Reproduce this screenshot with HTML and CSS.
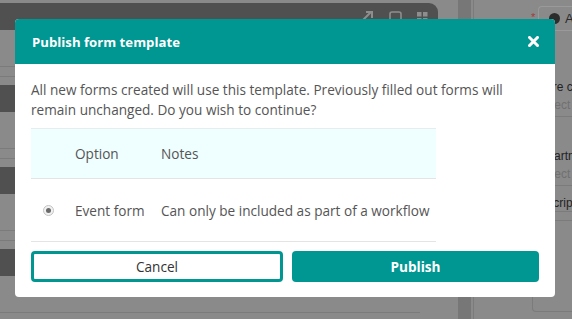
FILE: index.html
```html
<!DOCTYPE html>
<html>
<head>
<meta charset="utf-8">
<link rel="stylesheet" href="styles.css">
</head>
<body>
<div class="page">
  <div class="main">
    <div class="topbar">
      <svg class="tb-icon" width="16" height="14" viewBox="0 0 16 14"><path d="M2 13 L13 2 M8 2 H14 V8" fill="none" stroke="#8e8e8e" stroke-width="2"/></svg>
      <svg class="tb-icon" width="13" height="13" viewBox="0 0 13 13"><rect x="1" y="1" width="11" height="11" rx="2" fill="none" stroke="#8e8e8e" stroke-width="1.6"/></svg>
      <svg class="tb-icon" width="11" height="11" viewBox="0 0 11 11"><rect x="0" y="0" width="4.5" height="4.5" fill="#8e8e8e"/><rect x="6" y="0" width="4.5" height="4.5" fill="#8e8e8e"/><rect x="0" y="6" width="4.5" height="4.5" fill="#8e8e8e"/><rect x="6" y="6" width="4.5" height="4.5" fill="#8e8e8e"/></svg>
    </div>
    <div class="row-a"></div><div class="row-b"></div>
    <div class="band"></div>
    <div class="row-a"></div><div class="row-b"></div>
    <div class="band"></div>
    <div class="row-a"></div><div class="row-b"></div>
    <div class="band"></div>
    <div class="row-a"></div>
  </div>
  <div class="gutter"><div class="strip"></div></div>
  <div class="side">
    <div class="side-top">
      <span class="req">*</span>
      <div class="add-btn"><span class="add-ico"></span>Add</div>
    </div>
    <div class="field f1">
      <div class="label">Score card</div>
      <div class="input">Select</div>
    </div>
    <div class="field f2">
      <div class="label">Department</div>
      <div class="input">Select</div>
    </div>
    <div class="field f3">
      <div class="label underline">Description</div>
      <div class="textarea"></div>
    </div>
  </div>
</div>

<div class="modal">
  <div class="modal-header">
    <span class="modal-title">Publish form template</span>
    <svg class="close" width="11" height="11" viewBox="0 0 11 11"><path d="M1.5 1.5 L9.5 9.5 M9.5 1.5 L1.5 9.5" stroke="#fff" stroke-width="3" stroke-linecap="square"/></svg>
  </div>
  <div class="modal-body">
    <p class="intro">All new forms created will use this template. Previously filled out forms will remain unchanged. Do you wish to continue?</p>
    <div class="opts">
      <div class="opts-head">
        <span></span>
        <span>Option</span>
        <span>Notes</span>
      </div>
      <div class="opts-row">
        <span class="radio"><span class="dot"></span></span>
        <span>Event form</span>
        <span>Can only be included as part of a workflow</span>
      </div>
    </div>
    <div class="actions">
      <button class="btn btn-cancel">Cancel</button>
      <button class="btn btn-publish">Publish</button>
    </div>
  </div>
</div>
</body>
</html>
```

FILE: styles.css
```css
html, body {
  margin: 0;
  padding: 0;
}
body {
  width: 572px;
  height: 319px;
  overflow: hidden;
  background: #8a8a8a;
  position: relative;
  font-family: "Open Sans", Lato, sans-serif;
}
.page {
  display: grid;
  grid-template-columns: 438px 36px 1fr;
  height: 319px;
}
.main {
  padding-top: 3px;
  display: flex;
  flex-direction: column;
}
.topbar {
  height: 27px;
  background: #505050;
  border-top-right-radius: 9px;
  display: flex;
  align-items: center;
  justify-content: flex-end;
  gap: 15px;
  padding-right: 10px;
}
.tb-icon {
  display: block;
  margin-top: 1px;
}
.band {
  height: 27px;
  background: #505050;
}
.row-a {
  height: 36px;
  border-bottom: 1px solid #7b7b7b;
  margin-right: 18px;
}
.row-b {
  height: 9px;
  border-bottom: 1px solid #7b7b7b;
  margin-bottom: 8px;
  margin-right: 18px;
}
.gutter {
  padding-left: 20px;
  border-right: 1px solid #7b7b7b;
}
.strip {
  width: 13px;
  height: 100%;
  background: #777;
}
.side {
  padding-left: 58px;
  font-family: "Liberation Sans", Arial, sans-serif;
  font-size: 12px;
  overflow: hidden;
}
.side-top {
  position: relative;
  height: 25px;
  margin-top: 6px;
}
.req {
  position: absolute;
  left: -1px;
  top: 5px;
  color: #a23a3a;
  font-size: 11px;
}
.add-btn {
  margin-left: 6px;
  height: 25px;
  border: 1px solid #9a9a9a;
  border-right: none;
  border-radius: 4px 0 0 4px;
  box-sizing: border-box;
  display: flex;
  align-items: center;
  gap: 5px;
  padding-left: 10px;
  color: #2a2a2a;
  font-size: 13px;
  white-space: nowrap;
}
.add-ico {
  width: 11px;
  height: 11px;
  border-radius: 50%;
  background: #2c2c2c;
  flex: none;
}
.field .label {
  color: #232323;
  line-height: 16px;
  height: 16px;
  white-space: nowrap;
}
.f1 { margin-top: 48px; }
.f2 { margin-top: 31px; }
.f3 { margin-top: 9px; }
.input {
  height: 21px;
  line-height: 21px;
  padding-left: 5px;
  color: #707070;
  border-bottom: 1px solid #7b7b7b;
  white-space: nowrap;
}
.underline {
  border-bottom: 1px solid #7b7b7b;
}
.textarea {
  margin-top: 8px;
  height: 90px;
  border: 1px solid #7b7b7b;
  border-right: none;
  border-radius: 4px 0 0 4px;
}

.modal {
  position: absolute;
  left: 15px;
  top: 19px;
  width: 540px;
  height: 278px;
  background: #fff;
  border-radius: 4px;
  overflow: hidden;
}
.modal-header {
  height: 45px;
  background: #009691;
  display: flex;
  align-items: center;
  justify-content: space-between;
  padding: 0 16px 0 17px;
  color: #fff;
}
.modal-title {
  font-weight: 700;
  font-size: 13.2px;
}
.close {
  display: block;
}
.modal-body {
  padding: 16px 16px 0 16px;
}
.intro {
  margin: 0;
  font-size: 13.6px;
  line-height: 20px;
  color: #555;
}
.opts {
  width: 405px;
  margin-top: 8px;
  font-size: 13.6px;
  color: #555;
}
.opts-head, .opts-row {
  display: grid;
  grid-template-columns: 44px 86px 1fr;
  align-items: center;
}
.opts-head {
  height: 49px;
  background: #effefe;
  border-top: 1px solid #e6eded;
  border-bottom: 1px solid #e4e4e4;
}
.opts-row {
  height: 62px;
  border-bottom: 1px solid #e4e4e4;
}
.radio {
  margin-left: 12px;
  width: 11px;
  height: 11px;
  box-sizing: border-box;
  border: 1px solid #c4c4c4;
  border-radius: 50%;
  background: #f2f2f2;
  display: flex;
  align-items: center;
  justify-content: center;
}
.dot {
  width: 5px;
  height: 5px;
  border-radius: 50%;
  background: #6a6a6a;
}
.actions {
  margin-top: 9px;
  display: grid;
  grid-template-columns: 252px 247px;
  gap: 9px;
}
.btn {
  height: 31px;
  box-sizing: border-box;
  border-radius: 4px;
  font-family: "Open Sans", Lato, sans-serif;
  font-size: 13.6px;
  cursor: pointer;
}
.btn-cancel {
  background: #fff;
  border: 3px solid #009691;
  color: #333;
}
.btn-publish {
  background: #009691;
  border: none;
  color: #fff;
  font-weight: 700;
}
```
